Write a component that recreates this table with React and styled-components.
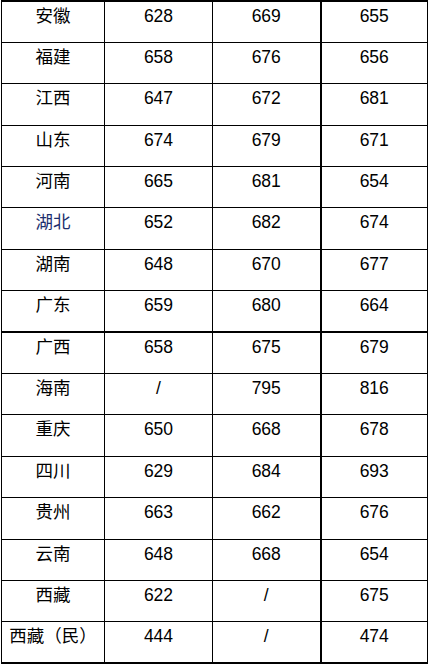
import React from 'react';
import styled, { createGlobalStyle } from 'styled-components';

const GlobalStyle = createGlobalStyle`
  html, body {
    margin: 0;
    padding: 0;
    background: #fff;
  }
`;

const Page = styled.div`
  padding-left: 1px;
`;

const Table = styled.table`
  width: 426px;
  border-collapse: collapse;
  table-layout: fixed;
  font-family: 'Liberation Sans', 'Noto Sans CJK SC', sans-serif;
  font-size: 17.5px;
  color: #000;
  border-top: 2px solid #000;
  border-bottom: 3px solid #000;
`;

const Col = styled.col`
  width: ${p => p.$w}px;
`;

const Row = styled.tr`
  height: 41.4px;
  border-bottom: ${p => (p.$thick ? '2px' : '1px')} solid #000;
`;

const Cell = styled.td`
  padding: 4px 0 0;
  vertical-align: top;
  text-align: center;
  line-height: 20px;
  white-space: nowrap;
  border-left: 1px solid #000;
  border-right: ${p => (p.$thick ? '2px' : '1px')} solid #000;
  color: ${p => (p.$blue ? '#1c2f6e' : '#000')};
`;

const colWidths = [103, 108, 108, 107];

const rows = [
  ['安徽', '628', '669', '655'],
  ['福建', '658', '676', '656'],
  ['江西', '647', '672', '681'],
  ['山东', '674', '679', '671'],
  ['河南', '665', '681', '654'],
  ['湖北', '652', '682', '674'],
  ['湖南', '648', '670', '677'],
  ['广东', '659', '680', '664'],
  ['广西', '658', '675', '679'],
  ['海南', '/', '795', '816'],
  ['重庆', '650', '668', '678'],
  ['四川', '629', '684', '693'],
  ['贵州', '663', '662', '676'],
  ['云南', '648', '668', '654'],
  ['西藏', '622', '/', '675'],
  ['西藏（民）', '444', '/', '474'],
];

const App = () => (
  <Page>
    <GlobalStyle />
    <Table>
      <colgroup>
        {colWidths.map((w, i) => (
          <Col key={i} $w={w} />
        ))}
      </colgroup>
      <tbody>
        {rows.map(([name, a, b, c], i) => (
          <Row key={name + i} $thick={name === '广东'}>
            <Cell $blue={name === '湖北'}>{name}</Cell>
            <Cell>{a}</Cell>
            <Cell $thick>{b}</Cell>
            <Cell>{c}</Cell>
          </Row>
        ))}
      </tbody>
    </Table>
  </Page>
);

export default App;
